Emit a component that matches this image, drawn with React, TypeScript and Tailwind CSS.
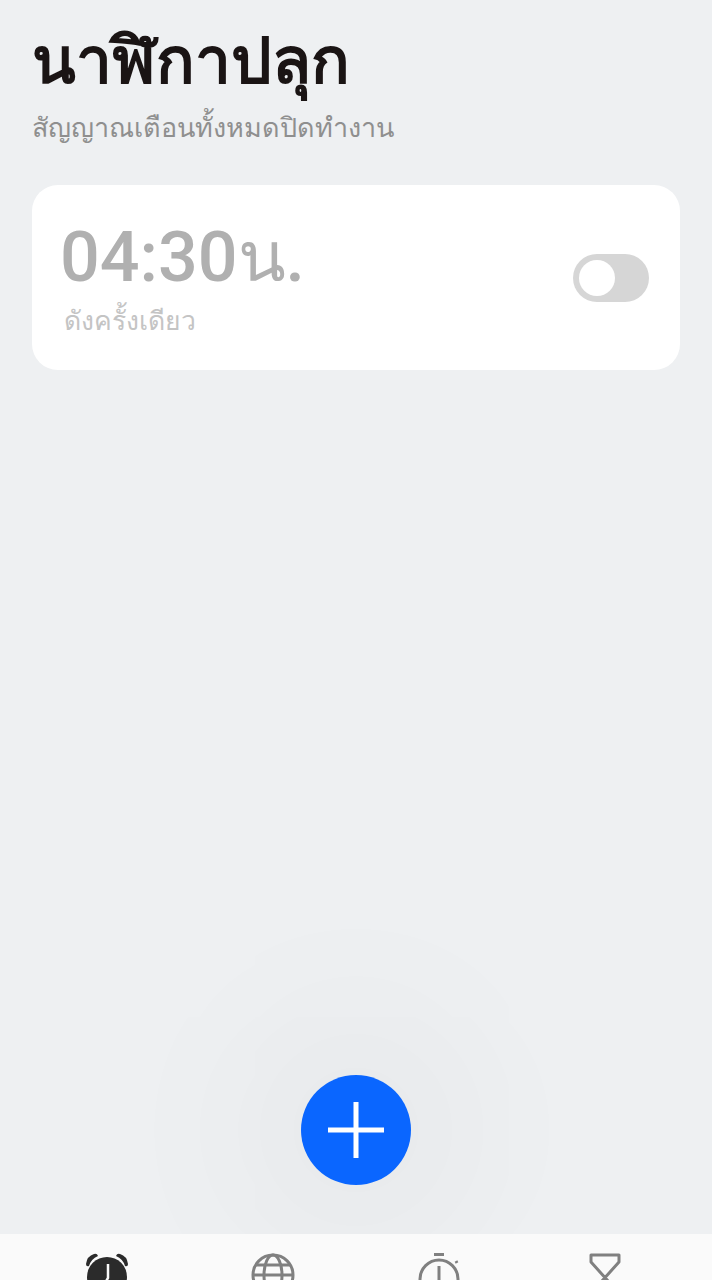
const thai = "font-['Roboto',sans-serif]";

function AlarmIcon() {
  return (
    <svg viewBox="0 0 44 44" className="w-11 h-11">
      <circle cx="22" cy="24" r="20" fill="#2b2b2b" />
      <path d="M1 11 Q2 3 9 1 Q12 0 13 3 Q6 6 4 13 Q1 14 1 11 Z" fill="#2b2b2b" />
      <path d="M43 11 Q42 3 35 1 Q32 0 31 3 Q38 6 40 13 Q43 14 43 11 Z" fill="#2b2b2b" />
      <path d="M23 11 V25 L17 35" fill="none" stroke="#fafafa" strokeWidth="2.5" />
    </svg>
  );
}

function GlobeIcon() {
  return (
    <svg viewBox="0 0 44 44" fill="none" stroke="#808080" strokeWidth="3" className="w-11 h-11">
      <circle cx="22" cy="22" r="20" />
      <ellipse cx="22" cy="22" rx="9" ry="20" />
      <path d="M5 12 H39 M2 22 H42 M5 32 H39" />
    </svg>
  );
}

function TimerIcon() {
  return (
    <svg viewBox="0 0 44 44" fill="none" stroke="#808080" strokeWidth="3" className="w-11 h-11">
      <circle cx="22" cy="26" r="19" />
      <path d="M17 1.5 H27" />
      <path d="M22 13 V29" />
      <path d="M39 8 L40 10" />
    </svg>
  );
}

function HourglassIcon() {
  return (
    <svg viewBox="0 0 44 44" fill="none" stroke="#808080" strokeWidth="3" strokeLinejoin="round" className="w-11 h-11">
      <path d="M8 2 H36 V9 L10 38 V43 H34 V38 L8 9 Z" />
    </svg>
  );
}

export default function App() {
  return (
    <div lang="th" className={`relative h-[1280px] w-[712px] overflow-hidden bg-[#eef0f2] flex flex-col ${thai}`}>
      <div className="flex-1 px-8 pt-[22px]">
        <h1 className="text-[64px] leading-[80px] font-bold text-[#1a1414]">นาฬิกาปลุก</h1>
        <p className="text-[27px] leading-[52px] text-[#8f8f8f]">สัญญาณเตือนทั้งหมดปิดทำงาน</p>

        <div className="mt-[31px] h-[185px] rounded-[26px] bg-white pl-[28px] pr-[31px] flex items-center justify-between">
          <div className="pt-[2px]">
            <div className="text-[70px] leading-[80px] font-medium text-[#b0b0b0]">04:30น.</div>
            <div className="mt-1 pl-[4px] text-[26.5px] leading-[40px] text-[#c4c4c4]">ดังครั้งเดียว</div>
          </div>
          <div className="w-[76px] h-[48px] rounded-full bg-[#d6d6d6] py-[6px] pl-[6px]">
            <div className="w-9 h-9 rounded-full bg-white" />
          </div>
        </div>
      </div>

      <div className="absolute left-[301px] top-[1075px] w-[110px] h-[110px] rounded-full bg-[#0a66ff] flex items-center justify-center shadow-[0_0_180px_60px_rgba(0,0,0,0.04)]">
        <svg viewBox="0 0 56 56" className="w-14 h-14" stroke="#fff" strokeWidth="5">
          <path d="M28 0 V56 M0 28 H56" />
        </svg>
      </div>

      <nav className="relative h-[46px] bg-[#fafafa] px-6 pt-[19px] grid grid-cols-4 justify-items-center overflow-hidden">
        <AlarmIcon />
        <GlobeIcon />
        <TimerIcon />
        <HourglassIcon />
      </nav>
    </div>
  );
}
